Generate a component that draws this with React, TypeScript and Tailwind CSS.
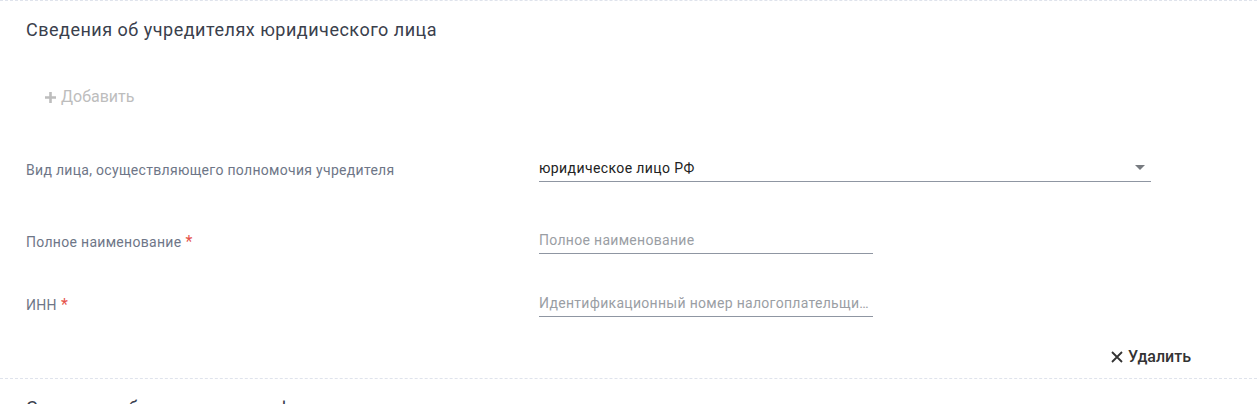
import React from "react";

const font = { fontFamily: "Roboto, 'Noto Sans', sans-serif" };

function Field(props: { placeholder?: string; value?: string; select?: boolean; wide?: boolean }) {
  return (
    <div
      className={`flex h-[32px] items-end border-b border-[#8f96a2] pb-[3px] ${
        props.wide ? "w-[612px]" : "w-[334px]"
      }`}
    >
      {props.value ? (
        <span className="flex-1 truncate text-[14px] leading-5 tracking-[0.4px] text-[#222222]">
          {props.value}
        </span>
      ) : (
        <span className="flex-1 truncate text-[14px] leading-5 tracking-[0.3px] text-[#9a9ea4]">
          {props.placeholder}
        </span>
      )}
      {props.select && (
        <svg width="10" height="5" viewBox="0 0 10 5" className="mb-[8px] mr-[6px]">
          <path d="M0 0h10L5 5z" fill="#777b80" />
        </svg>
      )}
    </div>
  );
}

function Row(props: { label: string; required?: boolean; children: React.ReactNode; className?: string }) {
  return (
    <div className={`flex ${props.className ?? ""}`}>
      <div className="mt-[10px] w-[513px] text-[14px] leading-5 tracking-[0.3px] text-[#6e7687]">
        {props.label}
        {props.required && <span className="ml-1 text-[16px] text-[#e5534b]">*</span>}
      </div>
      {props.children}
    </div>
  );
}

export default function App() {
  return (
    <div className="min-h-screen bg-white" style={font}>
      <section className="border-t border-dashed border-[#dfe3ec] px-[26px] pt-[17px]">
        <h2 className="text-[18px] leading-6 font-normal tracking-[0.5px] text-[#3a404c]">
          Сведения об учредителях юридического лица
        </h2>

        <button className="mt-[37px] flex h-9 items-center gap-[5px] px-[19px] text-[16px] text-[#bdbdbd]">
          <svg width="11" height="11" viewBox="0 0 11 11">
            <path d="M4.2 0h2.6v4.2H11v2.6H6.8V11H4.2V6.8H0V4.2h4.2z" fill="#bdbdbd" />
          </svg>
          Добавить
        </button>

        <Row label="Вид лица, осуществляющего полномочия учредителя" className="mt-[35px]">
          <Field value="юридическое лицо РФ" select wide />
        </Row>
        <Row label="Полное наименование" required className="mt-[40px]">
          <Field placeholder="Полное наименование" />
        </Row>
        <Row label="ИНН" required className="mt-[31px]">
          <Field placeholder="Идентификационный номер налогоплательщика" />
        </Row>

        <div className="mt-[22px] flex justify-end pr-[40px]">
          <button className="flex h-9 items-center gap-[5px] text-[16px] font-medium text-[#333333]">
            <svg width="12" height="12" viewBox="0 0 12 12">
              <path d="M1 1l10 10M11 1L1 11" stroke="#333333" strokeWidth="1.8" />
            </svg>
            Удалить
          </button>
        </div>
      </section>

      <section className="mt-[3px] border-t border-dashed border-[#dfe3ec] px-[26px] pt-[17px]">
        <h2 className="text-[18px] leading-6 font-normal tracking-[0.5px] text-[#3a404c]">
          Сведения об учредителях – физических лицах
        </h2>
      </section>
    </div>
  );
}
